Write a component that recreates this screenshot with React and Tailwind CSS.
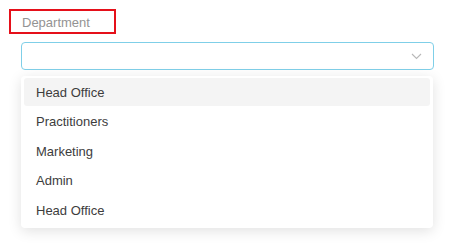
import React, { useState } from 'react';

const departments = ['Head Office', 'Practitioners', 'Marketing', 'Admin', 'Head Office'];

const DepartmentSelect = () => {
  const [active, setActive] = useState(0);

  return (
    <div className="pl-[21px] pr-[37px] pt-[9px]">
      {/* label, outlined in red in the reference */}
      <div className="ml-[-12px] w-[107px] h-[25px] border-2 border-[#e5101a] flex items-center pl-[11px] pt-[2px]">
        <span className="text-[13px] text-[#939393] leading-none">Department</span>
      </div>

      <div className="mt-[8px] h-[28px] rounded-[4px] border border-[#7fcfe8] bg-white flex items-center justify-end pr-[11px]">
        <svg width="11" height="7" viewBox="0 0 11 7" fill="none">
          <path d="M1 1l4.5 4.5L10 1" stroke="#b8b8b8" strokeWidth="1.1" />
        </svg>
      </div>

      <ul className="mt-[6px] mr-[1px] rounded-[4px] bg-white shadow-[0_3px_14px_rgba(0,0,0,0.12)] px-[3px] pt-[2px] pb-[4px] flex flex-col gap-[2px]">
        {departments.map((name, index) => (
          <li
            key={index}
            onMouseEnter={() => setActive(index)}
            className={`h-[27.5px] flex items-center pl-[12px] pt-[1px] rounded-[3px] text-[13px] text-[#3d3d3d] ${
              index === active ? 'bg-[#f4f4f4]' : ''
            }`}
          >
            {name}
          </li>
        ))}
      </ul>
    </div>
  );
};

export default function App() {
  return (
    <div className="w-[471px] h-[243px] bg-white font-['Liberation_Sans',Arial,sans-serif]">
      <DepartmentSelect />
    </div>
  );
}
